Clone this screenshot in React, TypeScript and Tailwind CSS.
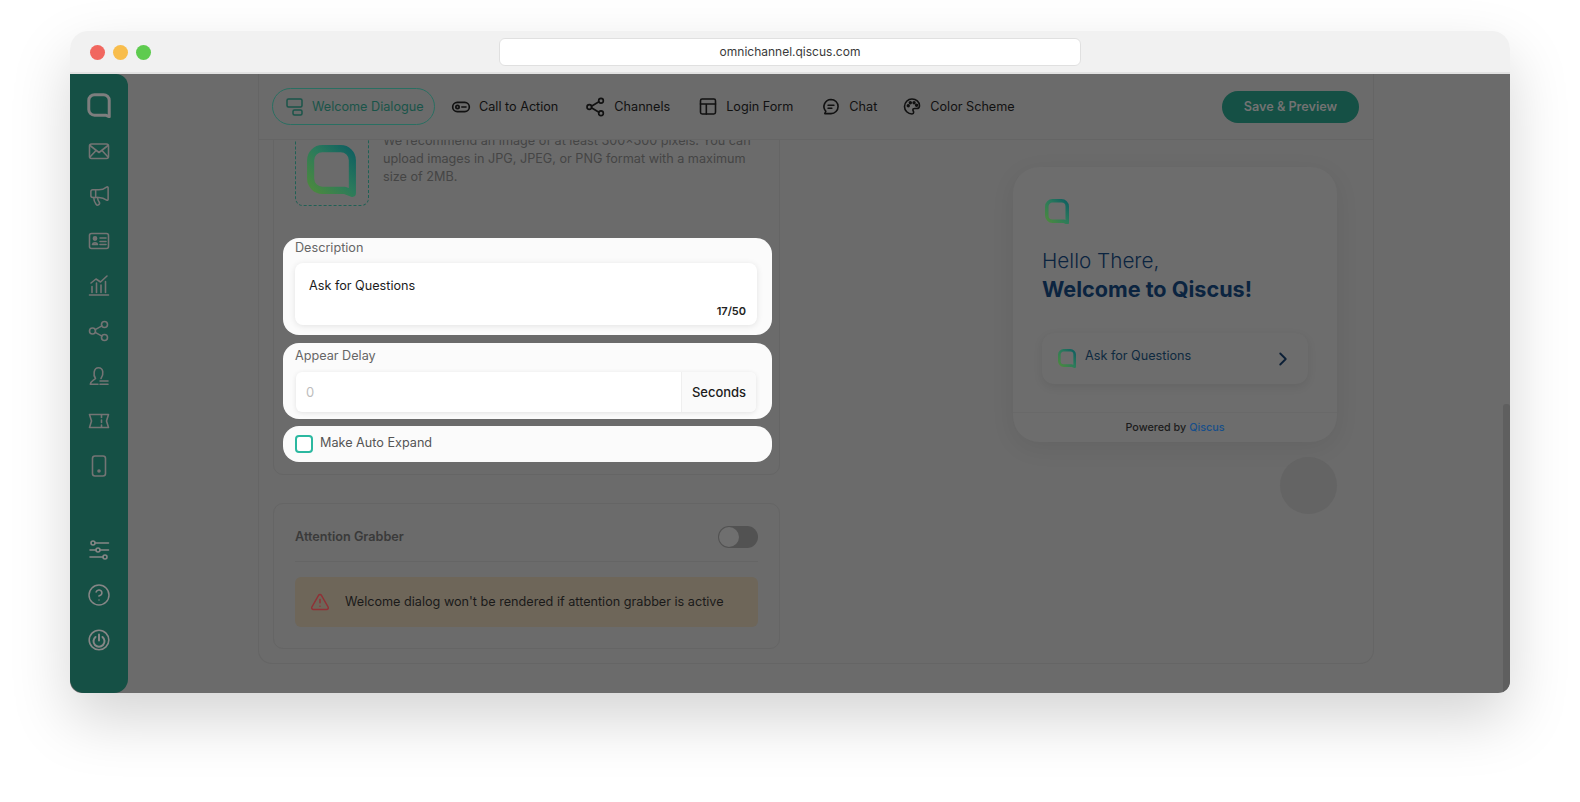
import { ChevronRight, CircleHelp, Megaphone, TriangleAlert } from 'lucide-react'
import type { ReactNode } from 'react'

const font = { fontFamily: 'Inter, "Liberation Sans", sans-serif' }

const Svg = ({ children, size = 24, width = 1.6 }: { children: ReactNode; size?: number; width?: number }) => (
  <svg width={size} height={size} viewBox="0 0 24 24" fill="none" stroke="currentColor" strokeWidth={width} strokeLinecap="round" strokeLinejoin="round">
    {children}
  </svg>
)

const QiscusLogo = ({ size, id, stroke, solid }: { size: number; id: string; stroke: number; solid?: string }) => (
  <svg width={size} height={size * 1.06} viewBox="0 0 48 51" fill="none">
    <defs>
      <linearGradient id={id} x1="0" y1="1" x2="1" y2="0">
        <stop offset="0" stopColor="#4e8a3c" />
        <stop offset="0.55" stopColor="#2a7a5c" />
        <stop offset="1" stopColor="#0f5f60" />
      </linearGradient>
    </defs>
    <path
      d="M15 3.500H33A11.500 11.500 0 0 1 44.500 15V47.500L37 44.500H15A11.500 11.500 0 0 1 3.500 33V15A11.500 11.500 0 0 1 15 3.500Z"
      stroke={solid ?? `url(#${id})`}
      strokeWidth={stroke}
      strokeLinejoin="round"
    />
  </svg>
)

const sidebarTop: ReactNode[] = [
  <QiscusLogo key="logo" size={24} id="side" stroke={6} solid="#7e7e7e" />,
  <Svg key="mail"><rect x="2.500" y="5" width="19" height="14.500" rx="2" /><path d="m3 6.500 9 7 9-7M3 18l6-6.500M21 18l-6-6.500" /></Svg>,
  <Megaphone key="mega" size={23} strokeWidth={1.6} />,
  <Svg key="card"><rect x="2.500" y="4.500" width="19" height="15" rx="2" /><circle cx="8" cy="9.500" r="1.600" fill="currentColor" /><path d="M5.500 15.500c.5-2.400 4.500-2.400 5 0ZM13 9h6M13 12.500h6M13 15.500h6" /></Svg>,
  <Svg key="chart"><path d="M2.500 21h19M5 18.500v-6M9.500 18.500V9M14 18.500V11M18.500 18.500V7.500M4 9l5-4 4.500 3 6.500-6" /></Svg>,
  <Svg key="share"><circle cx="5.500" cy="12" r="3" /><circle cx="17.500" cy="5.500" r="3" /><circle cx="17.500" cy="18.500" r="3" /><path d="m8.200 10.600 6.700-3.700M8.200 13.400l6.700 3.700" /></Svg>,
  <Svg key="person"><path d="M8.500 14.500C6 11 6.500 3.700 11.500 3.700S17 10.500 14 14.500M8.500 14.500C6.500 16.500 3.300 17.500 3.300 20.300H11M13 17H21M13 20.300H21" /></Svg>,
  <Svg key="ticket"><path d="M2.500 5.500h19l-2 6.500 2 6.500h-19l2-6.500ZM14.500 5.500v3M14.500 11v2.500M14.500 16v2.500" /></Svg>,
  <Svg key="phone"><rect x="5.500" y="2" width="13" height="20" rx="2.500" /><circle cx="12" cy="17" r="1" fill="currentColor" /></Svg>,
]

const sidebarBottom: ReactNode[] = [
  <Svg key="sliders"><circle cx="6" cy="5" r="2" /><circle cx="11" cy="12" r="2" /><circle cx="18" cy="19" r="2" /><path d="M8 5h13.500M3 12h6M13 12h8.500M3 19h13" /></Svg>,
  <CircleHelp key="help" size={24} strokeWidth={1.5} />,
  <Svg key="power"><circle cx="12" cy="12" r="9.800" /><path d="M8.500 9a5.500 5.500 0 1 0 7 0M12 6.500v6" strokeWidth={2} /></Svg>,
]

const tabs: { label: string; icon: ReactNode }[] = [
  {
    label: 'Call to Action',
    icon: <Svg size={22} width={2}><rect x="2" y="6.500" width="20" height="11" rx="5.500" /><circle cx="7.800" cy="12" r="2" /><path d="M13 12h5" /></Svg>,
  },
  {
    label: 'Channels',
    icon: <Svg size={24} width={2}><circle cx="4" cy="12" r="2.800" /><circle cx="18" cy="4.500" r="2.800" /><circle cx="18" cy="19.500" r="2.800" /><path d="m6.500 11 9-5.200M6.500 13l9 5.200" /></Svg>,
  },
  {
    label: 'Login Form',
    icon: <Svg size={21} width={1.900}><rect x="3" y="3" width="18" height="18" rx="2" /><path d="M3 9h18M10 9v12" /></Svg>,
  },
  {
    label: 'Chat',
    icon: <Svg size={21} width={1.900}><path d="M12 3.500a8.500 8.500 0 0 1 0 17H4.500l1.300-2.800A8.500 8.500 0 0 1 12 3.500Z" /><path d="M8.500 10.500h7M8.500 14h4.500" /></Svg>,
  },
  {
    label: 'Color Scheme',
    icon: <Svg size={21} width={1.900}><path d="M12 3a9 9 0 1 0 0 18c1.600 0 2-1 2-2 0-1.400-1-1.700-1-3 0-1 .8-1.600 2-1.600h2.500c2 0 3.500-1.200 3.500-3.400C21 6.500 17 3 12 3Z" /><circle cx="7.500" cy="11" r="1.100" fill="currentColor" /><circle cx="10" cy="7.500" r="1.100" fill="currentColor" /><circle cx="14.500" cy="7.500" r="1.100" fill="currentColor" /><circle cx="17.500" cy="10.500" r="1.100" fill="currentColor" /></Svg>,
  },
]

const App = () => {
  return (
    <div className="h-[802px] w-[1580px] overflow-hidden bg-white pl-[70px] pt-[31px]" style={font}>
      <div className="flex h-[662px] w-[1440px] flex-col overflow-hidden rounded-t-[18px] rounded-b-[12px] shadow-[0_26px_60px_rgba(0,0,0,0.17)]">
        {/* Browser chrome */}
        <div className="relative flex h-[43px] shrink-0 items-center justify-center border-b-2 border-[#e2e2e2] bg-[#f1f1f1]">
          <div className="absolute left-[20px] top-[14px] flex gap-[8px]">
            <span className="h-[15px] w-[15px] rounded-full bg-[#f1675f]" />
            <span className="h-[15px] w-[15px] rounded-full bg-[#f8bd4c]" />
            <span className="h-[15px] w-[15px] rounded-full bg-[#5ecb4f]" />
          </div>
          <div className="mt-[1px] flex h-[28px] w-[582px] items-center justify-center rounded-md border border-[#e0e0e0] bg-white text-[12px] text-[#3a3a3a]">
            omnichannel.qiscus.com
          </div>
        </div>

        <div className="flex min-h-0 flex-1 bg-[#6b6b6b]">
          {/* Sidebar */}
          <aside className="flex w-[58px] shrink-0 flex-col items-center rounded-tr-[12px] rounded-b-[14px] bg-[#155045] pt-[9px] text-[#747474]">
            {sidebarTop.map((icon, i) => (
              <div key={i} className="flex h-[45px] items-center justify-center">{icon}</div>
            ))}
            <div className="mt-[39px] flex flex-col text-[#868686]">
              {sidebarBottom.map((icon, i) => (
                <div key={i} className="flex h-[45px] items-center justify-center">{icon}</div>
              ))}
            </div>
          </aside>

          <main className="flex min-w-0 flex-1 pl-[130px]">
            <div className="flex h-[590px] w-[1116px] flex-col overflow-hidden rounded-b-[14px] border-x border-b border-[#656565]">
              {/* Tabs */}
              <div className="flex h-[66px] shrink-0 items-center border-b border-[#656565] pl-[13px] pr-[14px] text-[12.650px] text-[#111]">
                <div className="flex h-[37px] w-[163px] items-center gap-[9px] rounded-full border border-[#2a6f62] pl-[13px] text-[#1a5449]">
                  <svg width="17" height="18" viewBox="0 0 17 18" fill="none" stroke="currentColor" strokeWidth="1.500">
                    <rect x="1" y="1" width="15" height="8" rx="1.500" />
                    <rect x="7" y="12" width="9" height="5" rx="1.500" />
                  </svg>
                  <span className="pt-[1px]">Welcome Dialogue</span>
                </div>
                <div className="ml-4 flex items-center gap-7">
                  {tabs.map((tab) => (
                    <div key={tab.label} className="flex items-center gap-2 last:-ml-[3px]">
                      <span className="flex w-5 justify-center">{tab.icon}</span>
                      <span className="pt-[1px]">{tab.label}</span>
                    </div>
                  ))}
                </div>
                <button className="ml-auto flex h-[32px] w-[137px] items-center justify-center rounded-full bg-[#155045] pt-[1px] text-[12.650px] font-semibold text-[#727272]">
                  Save &amp; Preview
                </button>
              </div>

              {/* Body, scrolled past the top of the first card */}
              <div className="flex min-h-0 flex-1 justify-between overflow-hidden pl-[14px] pr-[36px]">
                <div className="-mt-[8px] w-[507px] shrink-0">
                  <div className="rounded-b-[10px] border border-[#656565] px-[21px] pb-[12px]">
                    <div className="flex items-start gap-[14px]">
                      <div className="flex h-[73px] w-[74px] shrink-0 items-center justify-center rounded-[8px] border border-dashed border-[#1f6155] pr-[2px] pt-[3px]">
                        <QiscusLogo size={49} id="upload" stroke={7} />
                      </div>
                      <p className="-mt-[1px] text-[12.650px] leading-[18px] text-[#454545]">
                        We recommend an image of at least 300×300 pixels. You can upload images in JPG, JPEG, or PNG format with a maximum size of 2MB.
                      </p>
                    </div>

                    <div className="mt-[32px] -ml-[12px] -mr-[14px] flex flex-col">
                      <div className="h-[97px] rounded-[16px] bg-[#fbfbfb] pl-3 pr-[15px]">
                        <div className="flex h-[25px] items-center pb-[5px] text-[12.650px] text-[#666]">Description</div>
                        <div className="flex h-[62px] flex-col justify-between rounded-[8px] bg-white pb-[7px] pl-[14px] pr-[11px] pt-[15px] shadow-[0_1px_6px_rgba(0,0,0,0.1)]">
                          <div className="text-[12.650px] leading-[16px] text-[#1c1c1c]">Ask for Questions</div>
                          <div className="self-end text-[11px] font-semibold leading-[14px] text-[#222]">17/50</div>
                        </div>
                      </div>
                      <div className="mt-2 h-[76px] rounded-[16px] bg-[#fbfbfb] pl-[13px] pr-[16px]">
                        <div className="-ml-[1px] flex h-[29px] items-center pb-[3px] text-[12.650px] text-[#666]">Appear Delay</div>
                        <div className="flex h-[40px] overflow-hidden rounded-[6px] bg-white text-[13px] shadow-[0_1px_5px_rgba(0,0,0,0.1)]">
                          <div className="flex flex-1 items-center pl-[10px] pt-[1px] text-[#bdbdbd]">0</div>
                          <div className="flex w-[75px] items-center justify-center border-l border-[#efefef] bg-[#fafafa] pt-[1px] font-medium text-[#1c1c1c]">Seconds</div>
                        </div>
                      </div>
                      <div className="mt-[7px] flex h-[36px] items-center gap-[7px] rounded-[16px] bg-[#fbfbfb] pl-3">
                        <span className="h-[18px] w-[18px] rounded-[4px] border-2 border-[#2bb8a0] bg-white" />
                        <span className="-mt-[1px] text-[12.650px] text-[#555]">Make Auto Expand</span>
                      </div>
                    </div>
                  </div>

                  <div className="mt-[28px] h-[146px] rounded-[10px] border border-[#656565] px-[21px]">
                    <div className="flex h-[58px] items-center justify-between border-b border-[#656565] pt-[10px]">
                      <span className="text-[12.650px] font-semibold text-[#3a3a3a]">Attention Grabber</span>
                      <span className="-mt-[2px] flex h-[22px] w-[40px] items-center rounded-full bg-[#525252] pl-[1px]">
                        <span className="h-[20px] w-[20px] rounded-full bg-[#6f6f6f]" />
                      </span>
                    </div>
                    <div className="mt-[15px] flex h-[50px] items-center gap-[15px] rounded-[6px] bg-[#6e6659] pl-[15px] text-[12.650px] text-[#1a1a1a]">
                      <TriangleAlert size={20} strokeWidth={1.800} className="text-[#8f3136]" />
                      Welcome dialog won't be rendered if attention grabber is active
                    </div>
                  </div>
                </div>

                {/* Widget preview */}
                <div className="mt-[27px] flex w-[324px] shrink-0 flex-col items-end">
                  <div className="flex h-[275px] w-full flex-col rounded-[26px] bg-[#6d6d6d] shadow-[0_6px_24px_rgba(0,0,0,0.07)]">
                    <div className="flex-1 pl-[29px] pr-[29px] pt-[32px]">
                      <div className="pl-[3px]"><QiscusLogo size={24} id="widget" stroke={7} /></div>
                      <div className="mt-[23px] text-[20.700px] font-light leading-[28px] text-[#0b2440]">Hello There,</div>
                      <div className="text-[21.600px] font-bold leading-[28px] text-[#0b2440]">Welcome to Qiscus!</div>
                      <div className="mt-[30px] flex h-[51px] items-center rounded-[12px] bg-[#6d6d6d] pl-[16px] pr-[14px] shadow-[0_3px_10px_rgba(0,0,0,0.08)]">
                        <QiscusLogo size={18} id="row" stroke={7} />
                        <span className="-mt-[5px] ml-[9px] text-[12.650px] text-[#0f2a40]">Ask for Questions</span>
                        <ChevronRight size={22} strokeWidth={2} className="ml-auto text-[#0b1f36]" />
                      </div>
                    </div>
                    <div className="flex h-[30px] shrink-0 items-center justify-center border-t border-[#696969] pt-[1px] text-[10.800px] font-medium text-[#1c1c1c]">
                      Powered by&nbsp;<span className="text-[#174f8a]">Qiscus</span>
                    </div>
                  </div>
                  <div className="mt-[15px] h-[57px] w-[57px] rounded-full bg-[#646464]" />
                </div>
              </div>
            </div>

            {/* Scrollbar */}
            <div className="ml-auto flex w-[7px] shrink-0 flex-col justify-end">
              <div className="h-[289px] rounded-t-[3px] bg-[#5f5f5f]" />
            </div>
          </main>
        </div>
      </div>
    </div>
  )
}

export default App
